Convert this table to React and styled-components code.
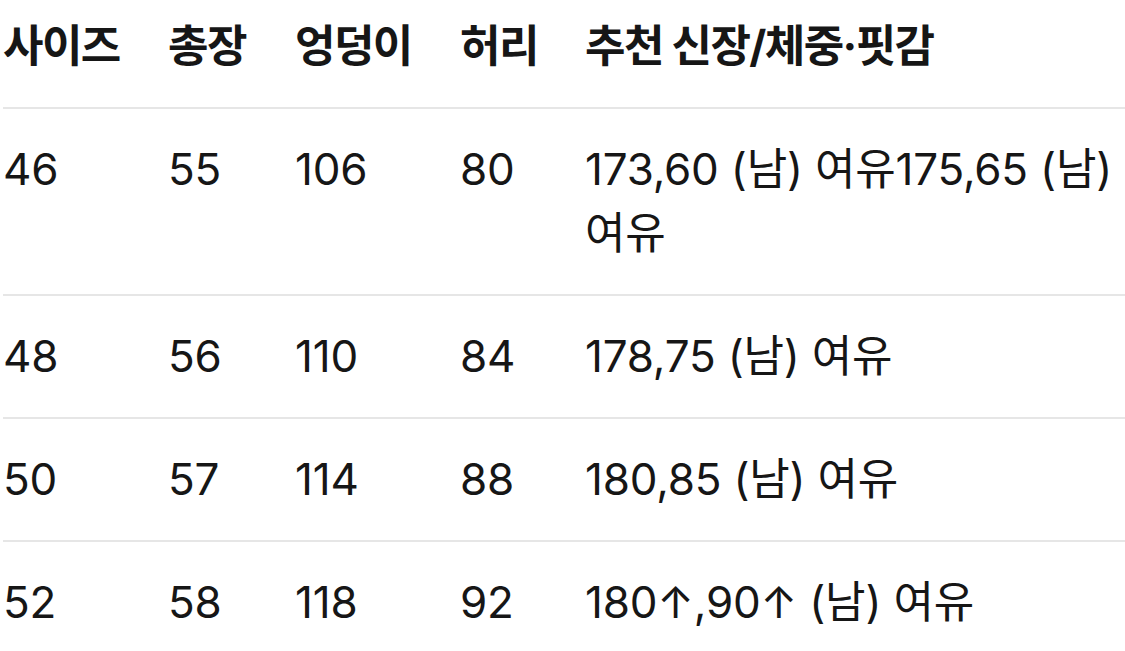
import React from "react";
import styled, { createGlobalStyle } from "styled-components";

const GlobalStyle = createGlobalStyle`
  html, body {
    margin: 0;
    padding: 0;
    background: #ffffff;
  }
  body {
    font-family: Inter, "Noto Sans CJK KR", sans-serif;
    color: #161616;
    -webkit-font-smoothing: antialiased;
  }
`;

const Wrapper = styled.div`
  width: 1122px;
  margin-left: 3px;
  overflow: hidden;
`;

const Row = styled.div`
  display: grid;
  grid-template-columns: 165px 127px 165px 125px 1fr;
  border-bottom: 2px solid #e6e6e6;
  padding: ${(props) => (props.$head ? "14px 0 29px" : "28px 0 29px")};

  &:last-child {
    border-bottom: none;
  }
`;

const Cell = styled.div`
  font-size: 44px;
  line-height: 64px;
  font-weight: ${(props) => (props.$head ? 700 : 400)};
  letter-spacing: ${(props) => (props.$head ? "-1.6px" : "-0.2px")};
  white-space: ${(props) => (props.$wrap ? "normal" : "nowrap")};
  padding-right: 8px;
`;

const headers = ["사이즈", "총장", "엉덩이", "허리", "추천 신장/체중·핏감"];

const rows = [
  ["46", "55", "106", "80", "173,60 (남) 여유175,65 (남) 여유"],
  ["48", "56", "110", "84", "178,75 (남) 여유"],
  ["50", "57", "114", "88", "180,85 (남) 여유"],
  ["52", "58", "118", "92", "180↑,90↑ (남) 여유"],
];

const App = () => {
  return (
    <Wrapper>
      <GlobalStyle />
      <Row $head>
        {headers.map((h) => (
          <Cell $head key={h}>
            {h}
          </Cell>
        ))}
      </Row>
      {rows.map((row) => (
        <Row key={row[0]}>
          {row.map((value, idx) => (
            <Cell key={idx} $wrap={idx === 4}>
              {value}
            </Cell>
          ))}
        </Row>
      ))}
    </Wrapper>
  );
};

export default App;
